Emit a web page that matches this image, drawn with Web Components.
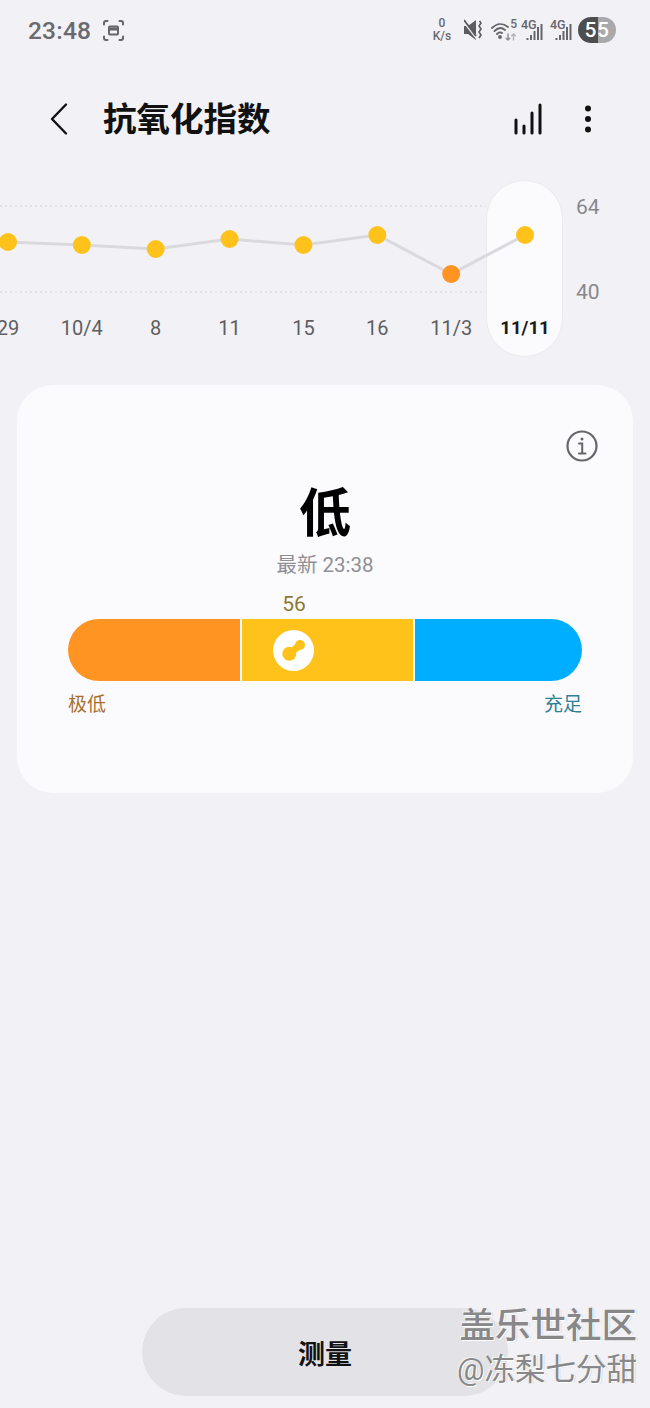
<!DOCTYPE html>
<html lang="zh">
<head>
<meta charset="utf-8">
<title>抗氧化指数</title>
<style>
  html, body { margin: 0; padding: 0; background: #f1f1f6; }
  body { font-family: Roboto, "Noto Sans CJK SC", sans-serif; }
</style>
</head>
<body>
<score-page>
  <status-bar slot="status"></status-bar>
  <app-bar slot="bar" title="抗氧化指数"></app-bar>
  <trend-chart slot="chart"></trend-chart>
  <score-card slot="card" level="低" updated="最新 23:38" value="56"></score-card>
  <measure-button slot="action">测量</measure-button>
</score-page>

<script>
const CJK = 'Roboto, "Noto Sans CJK SC", sans-serif';

class ScorePage extends HTMLElement {
  constructor() {
    super();
    this.attachShadow({ mode: "open" });
    this.shadowRoot.innerHTML = `
      <style>
        :host { display: flex; flex-direction: column; width: 650px; height: 1408px; position: relative; overflow: hidden; background: #f1f1f6; font-family: ${CJK}; }
        .grow { flex: 1; }
        .mark { position: absolute; right: 13px; bottom: 20px; text-align: right; color: #88888a; text-shadow: 1px 1px 0 #fff, -1px -1px 0 #f4f4f4, 2px 1px 0 #dcdcdc; pointer-events: none; }
        .mark div:first-child { font-size: 35.5px; line-height: 42px; font-weight: 500; margin-bottom: 5px; }
        .mark div:last-child { font-size: 30.5px; line-height: 36px; }
      </style>
      <slot name="status"></slot>
      <slot name="bar"></slot>
      <slot name="chart"></slot>
      <slot name="card"></slot>
      <div class="grow"></div>
      <slot name="action"></slot>
      <div class="mark"><div>盖乐世社区</div><div>@冻梨七分甜</div></div>`;
  }
}

class StatusBar extends HTMLElement {
  constructor() {
    super();
    this.attachShadow({ mode: "open" });
    this.shadowRoot.innerHTML = `
      <style>
        :host { display: flex; align-items: center; height: 60px; padding: 0 34px 0 28px; color: #6a6a6e; }
        .time { font-size: 24.5px; font-weight: 500; letter-spacing: .2px; margin-right: 12px; }
        .icons { display: flex; align-items: center; margin-left: auto; gap: 6px; }
        .speed { font-size: 12px; line-height: 13px; font-weight: 500; text-align: center; width: 20px; margin-right: 6px; }
        .mute { margin-right: 3px; }
        .wifi { position: relative; width: 26px; height: 24px; margin-right: -3px; }
        .wifi span { position: absolute; right: 0; top: 0; font-size: 12px; line-height: 13px; font-weight: 500; }
        svg { display: block; }
        .battery { width: 38px; height: 26px; border-radius: 13px; display: flex; align-items: center; justify-content: center; background: linear-gradient(90deg, #4e4e50 0 53%, #a9a9ab 53%); color: #fff; font-size: 21px; font-weight: 500; letter-spacing: .5px; }
      </style>
      <span class="time">23:48</span>
      <svg width="21" height="21" viewBox="0 0 21 21" fill="none" stroke="#66666a" stroke-width="2" stroke-linecap="round">
        <path d="M1 4.500V3a2 2 0 0 1 2-2h1.500M16.500 1H18a2 2 0 0 1 2 2v1.500M20 16.500V18a2 2 0 0 1-2 2h-1.500M4.500 20H3a2 2 0 0 1-2-2v-1.500"/>
        <rect x="6" y="6.500" width="9" height="8" rx="1"/>
        <path d="M6.500 9h8" stroke-width="3" stroke-linecap="butt"/>
      </svg>
      <div class="icons">
        <div class="speed">0<br>K/s</div>
        <svg class="mute" width="18" height="22" viewBox="0 0 18 22" fill="#5c5c60">
          <path d="M0 7h4l8-6v20l-8-6H0z"/>
          <path d="M-1 2l14 18" stroke="#f1f1f6" stroke-width="1.800"/>
          <path d="M0 1l12 16" stroke="#5c5c60" stroke-width="1.800"/>
          <path d="M15.500 2l1.500 2-2 3 2 3-2 3 2 3-2 3" fill="none" stroke="#5c5c60" stroke-width="1.600"/>
        </svg>
        <div class="wifi">
          <svg width="26" height="24" viewBox="0 0 26 24" fill="none" stroke="#66666a" stroke-width="1.800" stroke-linecap="round">
            <path d="M1 10c5-5 11-5 16-1M3.500 13c3.500-3.500 7.500-3.500 10.500-1M6 16c2-2 4-2 5-1"/>
            <circle cx="9" cy="19" r="1" fill="#66666a"/>
            <path d="M17 16v6M15.200 20.200l1.800 1.800 1.800-1.800" stroke="#909094" stroke-width="1.400"/>
            <path d="M22.500 22v-6M20.700 17.800l1.800-1.800 1.800 1.800" stroke="#b4b4b6" stroke-width="1.400"/>
          </svg>
          <span>5</span>
        </div>
        <signal-mini></signal-mini>
        <signal-mini></signal-mini>
        <div class="battery">55</div>
      </div>`;
  }
}

class SignalMini extends HTMLElement {
  constructor() {
    super();
    this.attachShadow({ mode: "open" });
    this.shadowRoot.innerHTML = `
      <style>
        :host { display: block; position: relative; width: 23px; height: 24px; color: #66666a; }
        span { position: absolute; left: 1px; top: 0; font-size: 12.5px; line-height: 13px; font-weight: 500; }
        svg { position: absolute; left: 0; top: 0; }
      </style>
      <svg width="23" height="24" viewBox="0 0 23 24" fill="#66666a">
        <rect x="6.500" y="20" width="2" height="2"/>
        <rect x="10" y="17" width="2" height="5"/>
        <rect x="13.500" y="13" width="2" height="9"/>
        <rect x="17" y="9" width="2" height="13"/>
        <rect x="20.500" y="6" width="2" height="16"/>
      </svg>
      <span>4G</span>`;
  }
}

class AppBar extends HTMLElement {
  constructor() {
    super();
    this.attachShadow({ mode: "open" });
    this.shadowRoot.innerHTML = `
      <style>
        :host { display: flex; align-items: center; height: 120px; padding: 0 58px 0 50px; color: #111; }
        h1 { margin: 0 0 0 33px; font-size: 33.500px; line-height: 44px; font-weight: 700; flex: 1; }
        svg { display: block; margin-bottom: 3px; }
        .stats { margin-right: 40px; }
      </style>
      <svg width="20" height="34" viewBox="0 0 20 34" fill="none" stroke="#111" stroke-width="2.400" stroke-linecap="round" stroke-linejoin="round"><path d="M16 2.500L2 17l14 14.500"/></svg>
      <h1></h1>
      <svg class="stats" width="30" height="32" viewBox="0 0 30 32" fill="none" stroke="#111" stroke-width="3" stroke-linecap="round">
        <path d="M2 17v13M10 23v7M18 10v20M26 2v28"/>
      </svg>
      <svg width="8" height="30" viewBox="0 0 8 30" fill="#111"><circle cx="4" cy="4.500" r="3"/><circle cx="4" cy="15" r="3"/><circle cx="4" cy="25.500" r="3"/></svg>`;
    this.shadowRoot.querySelector("h1").textContent = this.getAttribute("title");
  }
}

class TrendChart extends HTMLElement {
  constructor() {
    super();
    this.attachShadow({ mode: "open" });
    const step = 73.86;
    const first = 8;
    const points = [
      ["29", 62, "#ffc21a"], ["10/4", 65, "#ffc21a"], ["8", 69, "#ffc21a"], ["11", 59, "#ffc21a"],
      ["15", 65, "#ffc21a"], ["16", 55, "#ffc21a"], ["11/3", 94, "#ff9422"], ["11/11", 55, "#ffc21a"],
    ].map((p, i) => ({ label: p[0], y: p[1], color: p[2], x: first + i * step }));
    const line = points.map(p => `${p.x},${p.y}`).join(" ");
    const dots = points.map(p => `<circle cx="${p.x}" cy="${p.y}" r="9" fill="${p.color}"/>`).join("");
    const labels = points.map((p, i) => `<span class="${i === points.length - 1 ? "now" : ""}" style="left:${p.x}px">${p.label}</span>`).join("");
    this.shadowRoot.innerHTML = `
      <style>
        :host { display: block; position: relative; height: 177px; overflow: hidden; }
        .pill { position: absolute; left: 486px; top: 0; width: 77px; height: 177px; box-sizing: border-box; border-radius: 39px; background: #fbfbfe; border: 1px solid #ebebef; }
        svg { position: absolute; left: 0; top: 0; }
        .labels span { position: absolute; top: 134px; transform: translateX(-50%); font-size: 20px; line-height: 28px; color: #5e5e62; white-space: nowrap; }
        .labels span.now { font-size: 18.5px; font-weight: 700; color: #1a1a1a; }
        .axis { position: absolute; left: 576px; font-size: 21px; line-height: 26px; color: #88888c; }
      </style>
      <svg width="486" height="177"><path d="M0 26H486M0 112H486" stroke="#dedee2" stroke-width="1.500" stroke-dasharray="2 3"/></svg>
      <div class="pill"></div>
      <svg width="650" height="177">
        <polyline points="${line}" fill="none" stroke="#dadade" stroke-width="3"/>
        ${dots}
      </svg>
      <div class="labels">${labels}</div>
      <span class="axis" style="top:14px">64</span>
      <span class="axis" style="top:99px">40</span>`;
  }
}

class ScoreCard extends HTMLElement {
  constructor() {
    super();
    this.attachShadow({ mode: "open" });
    this.shadowRoot.innerHTML = `
      <style>
        :host { display: block; box-sizing: border-box; height: 408px; margin: 28px 17px 0; padding: 45px 51px 0; background: #fbfbfe; border-radius: 36px; position: relative; }
        .info { position: absolute; right: 35px; top: 45px; display: block; }
        .level { margin: 52px 0 0; text-align: center; font-size: 52px; line-height: 66px; font-weight: 700; color: #000; }
        .updated { margin-top: 3px; text-align: center; font-size: 20.500px; line-height: 28px; color: #8f8f94; }
        .value { margin-top: 11px; height: 28px; margin-left: 201px; width: 50px; text-align: center; font-size: 21px; line-height: 28px; color: #8a7a30; }
        .scale { display: flex; gap: 2px; height: 62px; margin-top: 1px; border-radius: 31px; overflow: hidden; }
        .seg { display: flex; align-items: center; }
        .low { width: 172px; background: #ff9422; }
        .mid { width: 171px; background: #ffc21a; padding-left: 31px; box-sizing: border-box; }
        .high { flex: 1; background: #00aeff; }
        .ends { display: flex; justify-content: space-between; margin-top: 11px; font-size: 19px; line-height: 26px; }
        .ends span:first-child { color: #a8702f; }
        .ends span:last-child { color: #2f7f95; }
      </style>
      <svg class="info" width="32" height="32" viewBox="0 0 32 32" fill="none" stroke="#66666a" stroke-width="2.200">
        <circle cx="16" cy="16" r="14.500"/>
        <path d="M13 13.500h3.200V23M13 23.500h6.500" stroke-linecap="round" stroke-width="2"/>
        <circle cx="16" cy="9" r="1.500" fill="#66666a" stroke="none"/>
      </svg>
      <div class="level">${this.getAttribute("level")}</div>
      <div class="updated">${this.getAttribute("updated")}</div>
      <div class="value">${this.getAttribute("value")}</div>
      <div class="scale">
        <div class="seg low"></div>
        <div class="seg mid">
          <svg width="41" height="41" viewBox="0 0 41 41">
            <circle cx="20.500" cy="20.500" r="20.500" fill="#fff"/>
            <path d="M16.300 23.800L27 15" stroke="#ffc21a" stroke-width="7"/>
            <circle cx="27" cy="15" r="5" fill="#ffc21a"/>
            <circle cx="16.300" cy="23.800" r="7" fill="#ffc21a"/>
          </svg>
        </div>
        <div class="seg high"></div>
      </div>
      <div class="ends"><span>极低</span><span>充足</span></div>`;
  }
}

class MeasureButton extends HTMLElement {
  constructor() {
    super();
    this.attachShadow({ mode: "open" });
    this.shadowRoot.innerHTML = `
      <style>
        :host { display: flex; align-items: center; justify-content: center; width: 366px; height: 88px; margin: 0 0 12px 142px; border-radius: 44px; background: #e2e2e7; color: #111; font-size: 27px; font-weight: 700; }
      </style>
      <slot></slot>`;
  }
}

customElements.define("score-page", ScorePage);
customElements.define("status-bar", StatusBar);
customElements.define("signal-mini", SignalMini);
customElements.define("app-bar", AppBar);
customElements.define("trend-chart", TrendChart);
customElements.define("score-card", ScoreCard);
customElements.define("measure-button", MeasureButton);
</script>
</body>
</html>
